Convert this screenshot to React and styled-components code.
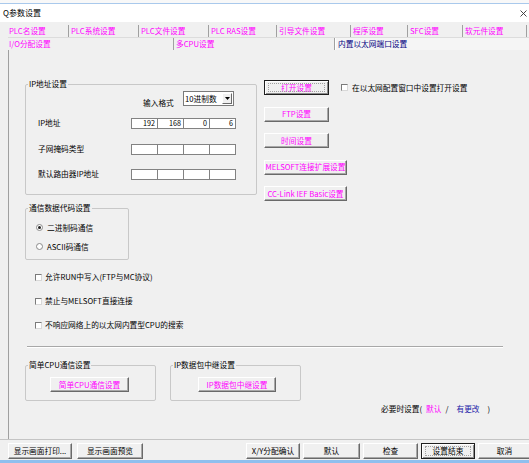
import React from 'react';
import styled, { createGlobalStyle, css } from 'styled-components';

const MAGENTA = '#ff00ff';

const GlobalStyle = createGlobalStyle`
	html,
	body {
		margin: 0;
		padding: 0;
		background: #f0f0f0;
	}

	body {
		font-family: 'Noto Sans CJK SC', 'Liberation Sans', sans-serif;
		font-size: 7.7px;
		color: #000;
	}
`;

const Window = styled.div`
	width: 529px;
	height: 463px;
	overflow: hidden;
	display: flex;
	flex-direction: column;
	background: linear-gradient(#f8f8f8 0 3px, #f0f0f0 3px);
`;

const TitleBar = styled.div`
	margin-top: 3px;
	height: 18px;
	border-top: 1px solid #a9c9ec;
	background: #fff;
	display: flex;
	align-items: center;
	justify-content: space-between;
	padding-left: 3px;
	font-size: 8px;
	line-height: 12px;
`;

const CloseIcon = styled.svg`
	margin-right: 2px;
	flex: none;
`;

const TabStrip = styled.div`
	padding: 3px 0 0 8px;
	display: flex;
	flex-direction: column;
`;

const TabRow = styled.div`
	display: flex;
	height: 12px;
	${({ $first }) =>
		$first &&
		css`
			border-bottom: 1px solid #dcdcdc;
		`}
`;

const Tab = styled.div`
	flex: ${({ $w }) => ($w ? `0 0 ${$w}px` : '1')};
	box-sizing: border-box;
	padding-left: ${({ $lead }) => ($lead ? 1 : 2)}px;
	line-height: 12px;
	white-space: nowrap;
	color: ${({ $active }) => ($active ? '#000080' : MAGENTA)};
	${({ $active }) =>
		$active
			? css`
					border-left: 1px solid #fff;
					background: #f5f5f5;
			  `
			: css`
					border-right: 1px solid #a0a0a0;
			  `}
`;

const Panel = styled.div`
	flex: 1;
	margin-left: 8px;
	border-left: 1px solid #a0a0a0;
	padding: 30px 0 0 16px;
	display: flex;
	flex-direction: column;
`;

const UpperGrid = styled.div`
	display: grid;
	grid-template-columns: 232px 1fr;
	column-gap: 7px;
	align-items: start;
`;

const LeftColumn = styled.div`
	display: flex;
	flex-direction: column;
`;

const GroupBox = styled.div`
	position: relative;
	box-sizing: border-box;
	width: ${({ $w }) => $w}px;
	margin-top: ${({ $mt = 0 }) => $mt}px;
	border: 1px solid #c8c8c8;
	border-radius: 2px;
	padding: ${({ $pad }) => $pad};
	display: flex;
	flex-direction: column;
`;

const GroupTitle = styled.span`
	position: absolute;
	top: -7px;
	left: 2px;
	padding: 0 1px;
	background: #f0f0f0;
	line-height: 12px;
	white-space: nowrap;
`;

const FormatRow = styled.div`
	display: flex;
	align-items: flex-start;
	padding-left: 117px;
	height: 15px;
`;

const FormatLabel = styled.span`
	width: 40px;
	margin-top: 6px;
	line-height: 12px;
`;

const Select = styled.div`
	width: 51px;
	height: 15px;
	box-sizing: border-box;
	border: 1px solid #7a7a7a;
	background: #fff;
	display: flex;
	align-items: center;
	justify-content: space-between;
	padding-left: 1px;
	line-height: 11px;
`;

const SelectArrow = styled.div`
	width: 10px;
	height: 11px;
	margin-right: 1px;
	box-sizing: border-box;
	border: 1px solid;
	border-color: #fff #696969 #696969 #fff;
	background: #f0f0f0;
	display: flex;
	align-items: center;
	justify-content: center;
`;

const FieldRow = styled.div`
	display: grid;
	grid-template-columns: 93px 105px;
	align-items: center;
	padding-left: 12px;
	margin-top: ${({ $mt }) => $mt}px;
	height: 11px;
`;

const FieldLabel = styled.span`
	line-height: 12px;
	white-space: nowrap;
`;

const AddressBox = styled.div`
	display: flex;
	height: 11px;
	box-sizing: border-box;
	border: 1px solid #828282;
	background: #fff;
`;

const AddressCell = styled.div`
	flex: 1;
	text-align: right;
	padding-right: 2px;
	line-height: 9px;
	font-size: 7.2px;
	& + & {
		border-left: 1px solid #828282;
	}
`;

const OptionRow = styled.label`
	display: flex;
	align-items: center;
	gap: ${({ $gap = 3 }) => $gap}px;
	height: ${({ $h = 12 }) => $h}px;
	padding-left: ${({ $pl = 0 }) => $pl}px;
	margin-top: ${({ $mt = 0 }) => $mt}px;
	line-height: 12px;
	white-space: nowrap;
`;

const CheckBox = styled.span`
	flex: none;
	width: 7px;
	height: 7px;
	box-sizing: border-box;
	border: 1px solid;
	border-color: #7a7a7a #d8d8d8 #d8d8d8 #7a7a7a;
	background: #fff;
`;

const Radio = styled.span`
	flex: none;
	width: 7px;
	height: 7px;
	box-sizing: border-box;
	border-radius: 50%;
	border: 1px solid #8a8a8a;
	background: #fff;
	display: flex;
	align-items: center;
	justify-content: center;

	&::after {
		content: '';
		width: 3px;
		height: 3px;
		border-radius: 50%;
		background: ${({ $checked }) => ($checked ? '#222' : 'transparent')};
	}
`;

const RightColumn = styled.div`
	display: flex;
	flex-direction: column;
	align-items: flex-start;
	gap: 11.5px;
`;

const ButtonLine = styled.div`
	display: flex;
	align-items: center;
	gap: 12px;
`;

const Button = styled.button`
	position: relative;
	flex: none;
	width: ${({ $w }) => $w}px;
	height: ${({ $h = 15 }) => $h}px;
	margin: 0 0 0 ${({ $ml = 0 }) => $ml}px;
	padding: 0;
	box-sizing: border-box;
	font: inherit;
	line-height: 12px;
	white-space: nowrap;
	color: ${({ $plain }) => ($plain ? '#000' : MAGENTA)};
	background: #f0f0f0;
	border: 1px solid;
	border-color: #fff #696969 #696969 #fff;
	box-shadow: inset -1px -1px 0 #a8a8a8;
	${({ $focus }) =>
		$focus &&
		css`
			border-color: #1e1e1e;
			box-shadow: inset 1px 1px 0 #fff, inset -1px -1px 0 #8c8c8c;

			&::after {
				content: '';
				position: absolute;
				inset: 2px 3px;
				border: 1px dotted #a0a0a0;
			}
		`}
`;

const Separator = styled.div`
	margin: 15px 0 0 2px;
	width: 476px;
	border-top: 1px solid #a8a8a8;
	border-bottom: 1px solid #fff;
`;

const GroupPair = styled.div`
	display: flex;
	gap: 14px;
	margin-top: 17px;
`;

const Note = styled.div`
	display: flex;
	margin-top: 2px;
	padding-left: 356px;
	line-height: 12px;
	white-space: nowrap;
`;

const NoteLink = styled.span`
	margin: 0 ${({ $m }) => $m};
	color: ${({ $c }) => $c};
`;

const BottomBar = styled.div`
	height: 21px;
	box-sizing: border-box;
	border-top: 1px solid #c4c4c4;
	display: flex;
	align-items: flex-start;
	padding: 3px 0 0 8px;
`;

const ButtonGroup = styled.div`
	display: flex;
	gap: ${({ $gap }) => $gap}px;
	margin-left: ${({ $ml = 0 }) => $ml}px;
`;

const BlueEdge = styled.div`
	height: 3px;
	background: #8fbfee;
`;

const tabsTop = [
	['PLC名设置', 61],
	['PLC系统设置', 70],
	['PLC文件设置', 70],
	['PLC RAS设置', 68],
	['引导文件设置', 74],
	['程序设置', 57],
	['SFC设置', 55],
	['软元件设置', 64],
];

const tabsBottom = [
	['I/O分配设置', 166],
	['多CPU设置', 161],
];

const sideButtons = [
	['FTP设置', 65],
	['时间设置', 65],
	['MELSOFT连接扩展设置', 83],
	['CC-Link IEF Basic设置', 83],
];

const addressRows = [
	['IP地址', ['192', '168', '0', '6'], 11],
	['子网掩码类型', ['', '', '', ''], 15],
	['默认路由器IP地址', ['', '', '', ''], 14],
];

const options = [
	'允许RUN中写入(FTP与MC协议)',
	'禁止与MELSOFT直接连接',
	'不响应网络上的以太网内置型CPU的搜索',
];

const footerRight = [
	['X/Y分配确认', 54],
	['默认', 57],
	['检查', 55],
	['设置结束', 54, true],
	['取消', 53],
];

const App = () => (
	<Window>
		<GlobalStyle />
		<TitleBar>
			<span>Q参数设置</span>
			<CloseIcon width="7" height="7" viewBox="0 0 7 7">
				<path d="M0.5 0.5L6.5 6.5M6.5 0.5L0.5 6.5" stroke="#333" strokeWidth="0.9" />
			</CloseIcon>
		</TitleBar>

		<TabStrip>
			<TabRow $first>
				{tabsTop.map(([label, w], i) => (
					<Tab key={label} $w={w} $lead={i === 0}>
						{label}
					</Tab>
				))}
			</TabRow>
			<TabRow>
				{tabsBottom.map(([label, w], i) => (
					<Tab key={label} $w={w} $lead={i === 0}>
						{label}
					</Tab>
				))}
				<Tab $active>内置以太网端口设置</Tab>
			</TabRow>
		</TabStrip>

		<Panel>
			<UpperGrid>
				<LeftColumn>
					<GroupBox $w={232} $mt={4} $pad="6px 0 15px 0">
						<GroupTitle>IP地址设置</GroupTitle>
						<FormatRow>
							<FormatLabel>输入格式</FormatLabel>
							<Select>
								<span>10进制数</span>
								<SelectArrow>
									<svg width="5" height="3" viewBox="0 0 5 3">
										<path d="M0 0H5L2.5 3Z" fill="#000" />
									</svg>
								</SelectArrow>
							</Select>
						</FormatRow>
						{addressRows.map(([label, cells, mt]) => (
							<FieldRow key={label} $mt={mt}>
								<FieldLabel>{label}</FieldLabel>
								<AddressBox>
									{cells.map((v, i) => (
										<AddressCell key={i}>{v}</AddressCell>
									))}
								</AddressBox>
							</FieldRow>
						))}
					</GroupBox>

					<GroupBox $w={104} $mt={13} $pad="13px 0 7px 0">
						<GroupTitle>通信数据代码设置</GroupTitle>
						<OptionRow $h={11} $pl={10} $gap={4}>
							<Radio $checked />
							二进制码通信
						</OptionRow>
						<OptionRow $h={11} $pl={10} $gap={4} $mt={8}>
							<Radio />
							ASCII码通信
						</OptionRow>
					</GroupBox>

					{options.map((text, i) => (
						<OptionRow key={text} $pl={10} $mt={i === 0 ? 11 : 12}>
							<CheckBox />
							{text}
						</OptionRow>
					))}
				</LeftColumn>

				<RightColumn>
					<ButtonLine>
						<Button $w={65} $focus>
							打开设置
						</Button>
						<OptionRow $gap={4}>
							<CheckBox />
							在以太网配置窗口中设置打开设置
						</OptionRow>
					</ButtonLine>
					{sideButtons.map(([label, w]) => (
						<Button key={label} $w={w}>
							{label}
						</Button>
					))}
				</RightColumn>
			</UpperGrid>

			<Separator />

			<GroupPair>
				<GroupBox $w={131} $pad="11px 0 8px 0">
					<GroupTitle>简单CPU通信设置</GroupTitle>
					<Button $w={79} $ml={24}>
						简单CPU通信设置
					</Button>
				</GroupBox>
				<GroupBox $w={131} $pad="11px 0 8px 0">
					<GroupTitle>IP数据包中继设置</GroupTitle>
					<Button $w={78} $ml={27}>
						IP数据包中继设置
					</Button>
				</GroupBox>
			</GroupPair>

			<Note>
				<span>必要时设置(</span>
				<NoteLink $c={MAGENTA} $m="4px 5px">
					默认
				</NoteLink>
				<span>/</span>
				<NoteLink $c="#1a1aa8" $m="8px 6px">
					有更改
				</NoteLink>
				<span>)</span>
			</Note>
		</Panel>

		<BottomBar>
			<ButtonGroup $gap={5}>
				<Button $w={64} $h={16} $plain>
					显示画面打印...
				</Button>
				<Button $w={66} $h={16} $plain>
					显示画面预览
				</Button>
			</ButtonGroup>
			<ButtonGroup $gap={3} $ml={103}>
				{footerRight.map(([label, w, focus]) => (
					<Button key={label} $w={w} $h={16} $plain $focus={focus}>
						{label}
					</Button>
				))}
			</ButtonGroup>
		</BottomBar>
		<BlueEdge />
	</Window>
);

export default App;
